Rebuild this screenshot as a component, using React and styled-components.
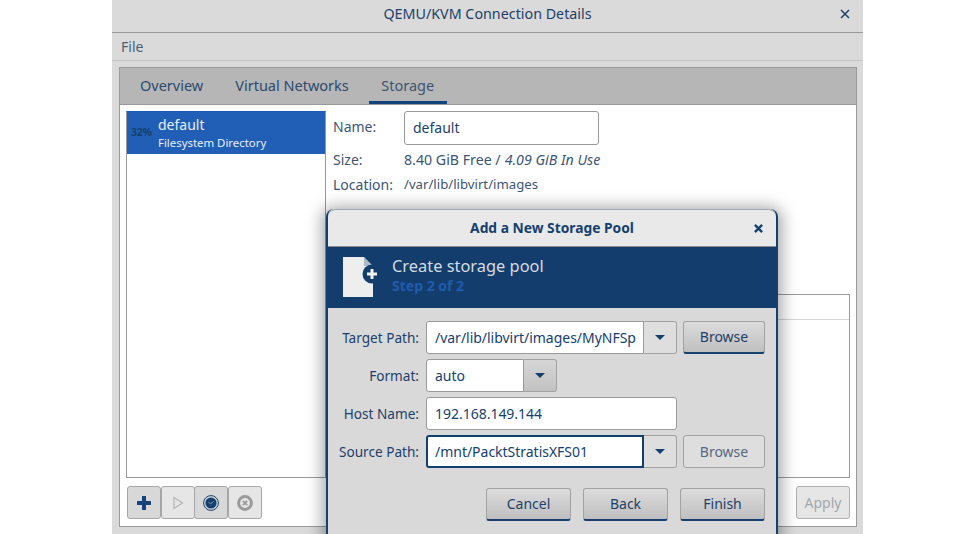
import React from "react";
import styled, { createGlobalStyle, css } from "styled-components";

const Global = createGlobalStyle`
  html, body { margin: 0; padding: 0; background: #fff; height: 534px; overflow: hidden; }
  * { box-sizing: border-box; }
  #root { font-family: "Noto Sans", "Open Sans", sans-serif; color: #1d3f69; font-size: 14px; }
`;

const Page = styled.div`
  position: relative;
  width: 975px;
  height: 534px;
  overflow: hidden;
  padding-left: 112px;
`;

const Win = styled.div`
  width: 751px;
  height: 534px;
  background: #dadada;
  display: flex;
  flex-direction: column;
`;

const TitleBar = styled.div`
  position: relative;
  height: 33px;
  flex: none;
  border-bottom: 1px solid #9a9a9a;
  padding-bottom: 5px;
  display: flex;
  align-items: center;
  justify-content: center;
  font-size: 14.3px;
  color: #1d3f69;
`;

const Close = styled.span`
  position: absolute;
  right: ${p => p.$right}px;
  top: ${p => p.$top}px;
  display: block;
  line-height: 0;
`;

const MenuBar = styled.div`
  height: 28px;
  flex: none;
  border-bottom: 1px solid #c6c6c6;
  padding: 0 9px;
  display: flex;
  align-items: center;
  color: #4d5f78;
  font-size: 14px;
`;

const Notebook = styled.div`
  margin: 6px 6px 7px 7px;
  flex: 1;
  min-height: 0;
  border: 1px solid #9a9a9a;
  display: flex;
  flex-direction: column;
  background: #fff;
`;

const TabBar = styled.div`
  height: 37px;
  flex: none;
  background: #b6b6b6;
  border-bottom: 1px solid #9a9a9a;
  display: flex;
  gap: 8px;
  padding-left: 8px;
`;

const Tab = styled.div`
  padding: 0 12px;
  display: flex;
  align-items: center;
  font-size: 14.5px;
  color: #2b4a70;
  border-bottom: 3px solid ${p => (p.$active ? "#14427a" : "transparent")};
  ${p => p.$active && css`color: #3c5573; padding: 0 12.5px;`}
`;

const Content = styled.div`
  flex: 1;
  min-height: 0;
  display: grid;
  grid-template-columns: 200px 1fr;
  grid-template-rows: 1fr 33px;
  column-gap: 7px;
  row-gap: 8px;
  padding: 6px 6px 7px 6px;
`;

const PoolList = styled.div`
  border: 1px solid #9a9a9a;
  border-top-color: #1e5cb2;
  background: #fff;
`;

const PoolRow = styled.div`
  height: 42px;
  background: #205fb5;
  display: flex;
  align-items: center;
  color: #e8eef8;
  position: relative;
  padding: 2px 0 0 31px;
`;

const Percent = styled.span`
  position: absolute;
  left: 4px;
  top: 13px;
  font-size: 10.5px;
  font-weight: 700;
  letter-spacing: -0.2px;
  color: #153f70;
`;

const PoolText = styled.div`
  display: flex;
  flex-direction: column;
  line-height: 18px;
`;

const PoolName = styled.span`
  font-size: 14px;
`;

const PoolType = styled.span`
  font-size: 11.4px;
`;

const Detail = styled.div`
  display: flex;
  flex-direction: column;
  min-height: 0;
`;

const InfoGrid = styled.div`
  display: grid;
  grid-template-columns: 71px 195px;
  align-items: center;
  color: #3c5573;
  font-size: 14px;
`;

const NameLabel = styled.span`
  padding-bottom: 3px;
`;

const InfoValue = styled.div`
  height: ${p => p.$h}px;
  display: flex;
  align-items: center;
  white-space: nowrap;
  gap: 4px;
  font-size: ${p => p.$size}px;
  color: #3c5573;
`;

const InfoEm = styled.em`
  font-style: italic;
`;

const NameEntry = styled.div`
  height: 34px;
  border: 1px solid #9a9a9a;
  border-radius: 3px;
  background: #fff;
  padding: 0 0 2px 8px;
  display: flex;
  align-items: center;
  color: #1d3f69;
`;

const VolumeBox = styled.div`
  margin-top: 99px;
  flex: 1;
  border: 1px solid #9a9a9a;
  display: flex;
  flex-direction: column;
`;

const VolumeHead = styled.div`
  height: 25px;
  border-bottom: 1px solid #d6d6d6;
`;

const Toolbar = styled.div`
  display: flex;
  align-items: stretch;
  padding-left: 1px;
`;

const ToolBtn = styled.div`
  width: 34px;
  margin-right: -0.4px;
  height: 33px;
  border: 1px solid #a6a6a6;
  border-radius: 3px;
  background: ${p => (p.$off ? "#e6e6e6" : "#d8d8d8")};
  display: flex;
  align-items: center;
  justify-content: center;
`;

const ApplyRow = styled.div`
  display: flex;
  justify-content: flex-end;
`;

const ApplyBtn = styled.div`
  width: 54px;
  height: 33px;
  border: 1px solid #b0b0b0;
  border-radius: 3px;
  background: #e6e6e6;
  color: #a2a8b0;
  display: flex;
  align-items: center;
  justify-content: center;
  font-size: 14px;
`;

const Dialog = styled.div`
  position: absolute;
  left: 326px;
  top: 209px;
  width: 452px;
  height: 340px;
  background: #d9d9d9;
  border-left: 2px solid #14406f;
  border-right: 2px solid #14406f;
  border-radius: 8px 8px 0 0;
  box-shadow: 0 2px 16px 4px rgba(0, 0, 0, 0.35);
  display: flex;
  flex-direction: column;
`;

const DialogTitle = styled.div`
  position: relative;
  height: 38px;
  flex: none;
  background: #e9e9e9;
  border-radius: 8px 8px 0 0;
  border-top: 1px solid #9fa9b5;
  border-bottom: 1px solid #8f8f8f;
  padding-bottom: 2px;
  display: flex;
  align-items: center;
  justify-content: center;
  font-weight: 700;
  font-size: 13.8px;
  color: #14406f;
`;

const Banner = styled.div`
  height: 61px;
  flex: none;
  background: #133d6d;
  display: flex;
  align-items: center;
  padding-left: 15px;
  gap: 14px;
`;

const BannerText = styled.div`
  display: flex;
  flex-direction: column;
  line-height: 20px;
  margin-top: -3px;
`;

const BannerTitle = styled.span`
  font-size: 16.4px;
  color: #d5dbe2;
`;

const BannerStep = styled.span`
  font-size: 14px;
  font-weight: 700;
  color: #1f5cae;
`;

const Form = styled.div`
  display: grid;
  grid-template-columns: 91px 1fr;
  column-gap: 7px;
  row-gap: 5px;
  padding: 13px 12px 0 0;
  align-items: center;
`;

const Label = styled.div`
  text-align: right;
  font-size: 13.6px;
  color: #1d3f69;
  white-space: nowrap;
`;

const FieldRow = styled.div`
  display: flex;
  gap: 6px;
  height: 33px;
`;

const Combo = styled.div`
  display: flex;
  width: ${p => p.$w}px;
  height: 100%;
`;

const Entry = styled.div`
  flex: 1;
  min-width: 0;
  height: 100%;
  background: #fff;
  border: ${p => (p.$focus ? "2px solid #14406f" : "1px solid #9a9a9a")};
  border-radius: ${p => (p.$solo ? "3px" : "3px 0 0 3px")};
  padding: 0 7px 0 ${p => (p.$focus ? 7 : 8)}px;
  display: flex;
  align-items: center;
  white-space: nowrap;
  font-size: 14px;
  letter-spacing: -0.02px;
  color: #14406f;
`;

const EntryText = styled.span`
  display: block;
  overflow: hidden;
  min-width: 0;
`;

const Arrow = styled.div`
  width: 33px;
  flex: none;
  height: 100%;
  border: 1px solid #a2a2a2;
  border-left: none;
  border-radius: 0 3px 3px 0;
  background: ${p => (p.$grad ? "linear-gradient(#d6d6d6, #c2c2c2)" : "#dedede")};
  display: flex;
  align-items: center;
  justify-content: center;
  &::after {
    content: "";
    border-left: 5px solid transparent;
    border-right: 5px solid transparent;
    border-top: 5px solid #14406f;
  }
`;

const Btn = styled.div`
  width: ${p => p.$w || 82}px;
  height: 100%;
  border: 1px solid #a2a2a2;
  border-radius: 3px;
  padding-bottom: 1px;
  display: flex;
  align-items: center;
  justify-content: center;
  font-size: 14px;
  ${p => p.$off
    ? css`background: #dedede; color: #56687f;`
    : css`
        background: linear-gradient(#dcdcdc, #bfbfbf);
        color: #1d3f69;
        border-bottom: 2px solid #14406f;
      `}
`;

const Actions = styled.div`
  display: flex;
  justify-content: flex-end;
  gap: 12px;
  height: 33px;
  margin: 20px 11px 0 0;
`;

const CloseIcon = ({ size, w, color }) => (
  <svg width={size} height={size} viewBox="0 0 10 10">
    <path d="M1 1 L9 9 M9 1 L1 9" stroke={color} strokeWidth={w} fill="none" />
  </svg>
);

const FileIcon = () => (
  <svg width="35" height="41" viewBox="0 0 35 41">
    <path d="M0 0 H21 L30 9 V40 H0 Z" fill="#eeeeee" />
    <path d="M21 0 L30 9 H21 Z" fill="#133d6d" opacity="0.3" />
    <circle cx="29" cy="17" r="9.5" fill="#133d6d" />
    <path d="M29 12 V22 M24 17 H34" stroke="#f2f2f2" strokeWidth="3" />
  </svg>
);

export default function App() {
  return (
    <Page>
      <Global />
      <Win>
        <TitleBar>
          QEMU/KVM Connection Details
          <Close $right={13} $top={9}><CloseIcon size={10} w={1.5} color="#1d3f69" /></Close>
        </TitleBar>
        <MenuBar>File</MenuBar>
        <Notebook>
          <TabBar>
            <Tab>Overview</Tab>
            <Tab>Virtual Networks</Tab>
            <Tab $active>Storage</Tab>
          </TabBar>
          <Content>
            <PoolList>
              <PoolRow>
                <Percent>32%</Percent>
                <PoolText>
                  <PoolName>default</PoolName>
                  <PoolType>Filesystem Directory</PoolType>
                </PoolText>
              </PoolRow>
            </PoolList>
            <Detail>
              <InfoGrid>
                <NameLabel>Name:</NameLabel>
                <NameEntry>default</NameEntry>
                <span>Size:</span>
                <InfoValue $h={28} $size={14.2}>8.40 GiB Free / <InfoEm>4.09 GiB In Use</InfoEm></InfoValue>
                <span>Location:</span>
                <InfoValue $h={22} $size={13.2}>/var/lib/libvirt/images</InfoValue>
              </InfoGrid>
              <VolumeBox><VolumeHead /></VolumeBox>
            </Detail>
            <Toolbar>
              <ToolBtn>
                <svg width="14" height="14" viewBox="0 0 14 14"><path d="M7 1 V13 M1 7 H13" stroke="#14427a" strokeWidth="4" strokeLinecap="round" /></svg>
              </ToolBtn>
              <ToolBtn $off>
                <svg width="12" height="14" viewBox="0 0 12 14"><path d="M2 1.5 L10.5 7 L2 12.5 Z" stroke="#b4b4b4" strokeWidth="1.2" fill="none" /></svg>
              </ToolBtn>
              <ToolBtn>
                <svg width="16" height="16" viewBox="0 0 16 16">
                  <circle cx="8" cy="8" r="7.4" fill="none" stroke="#14406f" strokeWidth="1" />
                  <circle cx="8" cy="8" r="5.6" fill="#14406f" />
                  <path d="M5.5 7 L7.5 9 L10.5 6.5" stroke="#8296ae" strokeWidth="1" fill="none" />
                </svg>
              </ToolBtn>
              <ToolBtn $off>
                <svg width="16" height="16" viewBox="0 0 16 16">
                  <circle cx="8" cy="8" r="6.4" fill="none" stroke="#9a9a9a" strokeWidth="3" />
                  <path d="M5.8 5.8 L10.2 10.2 M10.2 5.8 L5.8 10.2" stroke="#9a9a9a" strokeWidth="1.8" />
                </svg>
              </ToolBtn>
            </Toolbar>
            <ApplyRow><ApplyBtn>Apply</ApplyBtn></ApplyRow>
          </Content>
        </Notebook>
      </Win>
      <Dialog>
        <DialogTitle>
          Add a New Storage Pool
          <Close $right={13} $top={14}><CloseIcon size={9} w={2.6} color="#14406f" /></Close>
        </DialogTitle>
        <Banner>
          <FileIcon />
          <BannerText>
            <BannerTitle>Create storage pool</BannerTitle>
            <BannerStep>Step 2 of 2</BannerStep>
          </BannerText>
        </Banner>
        <Form>
          <Label>Target Path:</Label>
          <FieldRow>
            <Combo $w={251}>
              <Entry><EntryText>/var/lib/libvirt/images/MyNFSpool</EntryText></Entry>
              <Arrow />
            </Combo>
            <Btn>Browse</Btn>
          </FieldRow>
          <Label>Format:</Label>
          <FieldRow>
            <Combo $w={131}>
              <Entry><EntryText>auto</EntryText></Entry>
              <Arrow $grad />
            </Combo>
          </FieldRow>
          <Label>Host Name:</Label>
          <FieldRow>
            <Combo $w={251}>
              <Entry $solo><EntryText>192.168.149.144</EntryText></Entry>
            </Combo>
          </FieldRow>
          <Label>Source Path:</Label>
          <FieldRow>
            <Combo $w={251}>
              <Entry $focus><EntryText>/mnt/PacktStratisXFS01</EntryText></Entry>
              <Arrow />
            </Combo>
            <Btn $off>Browse</Btn>
          </FieldRow>
        </Form>
        <Actions>
          <Btn $w={85}>Cancel</Btn>
          <Btn $w={85}>Back</Btn>
          <Btn $w={85}>Finish</Btn>
        </Actions>
      </Dialog>
    </Page>
  );
}
